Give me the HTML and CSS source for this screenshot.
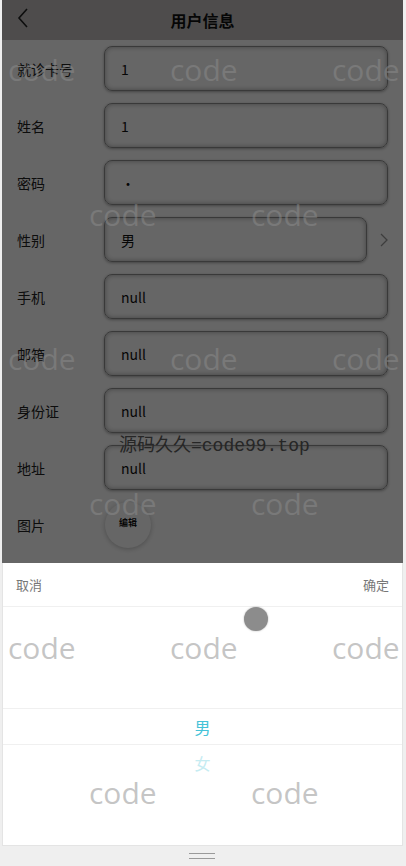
FILE: index.html
```html
<!DOCTYPE html>
<html>
<head>
  <meta charset="utf-8">
  <link rel="stylesheet" href="styles.css">
</head>
<body>
  <div class="screen">
    <div class="page">
      <div class="header">
        <svg class="back" width="14" height="22" viewBox="0 0 14 22">
          <path d="M11 2 L3 11 L11 20" fill="none" stroke="#222" stroke-width="1.6"/>
        </svg>
        <h1>用户信息</h1>
      </div>

      <div class="form">
        <div class="row"><span class="label">就诊卡号</span><div class="field">1</div></div>
        <div class="row"><span class="label">姓名</span><div class="field">1</div></div>
        <div class="row"><span class="label">密码</span><div class="field">·</div></div>
        <div class="row">
          <span class="label">性别</span><div class="field">男</div>
          <svg class="arrow" width="8" height="14" viewBox="0 0 8 14">
            <path d="M1 1 L7 7 L1 13" fill="none" stroke="#999" stroke-width="1.3"/>
          </svg>
        </div>
        <div class="row"><span class="label">手机</span><div class="field">null</div></div>
        <div class="row"><span class="label">邮箱</span><div class="field">null</div></div>
        <div class="row"><span class="label">身份证</span><div class="field">null</div></div>
        <div class="row"><span class="label">地址</span><div class="field">null</div></div>
        <div class="row">
          <span class="label">图片</span>
          <div class="avatar"><span>编辑</span></div>
        </div>
      </div>

      <div class="mask"></div>
    </div>

    <div class="picker">
      <div class="picker-toolbar">
        <span>取消</span>
        <span>确定</span>
      </div>
      <div class="picker-column">
        <div class="picker-item selected">男</div>
        <div class="picker-item faded">女</div>
      </div>
    </div>

    <!-- watermark layer -->
    <div class="watermark">
      <div class="wm-row"><span>code</span><span>code</span><span>code</span></div>
      <div class="wm-row shift"><span>code</span><span>code</span></div>
      <div class="wm-row"><span>code</span><span>code</span><span>code</span></div>
      <div class="wm-row shift"><span>code</span><span>code</span></div>
      <div class="wm-row"><span>code</span><span>code</span><span>code</span></div>
      <div class="wm-row shift"><span>code</span><span>code</span></div>
    </div>
    <div class="site-mark">源码久久=code99.top</div>
    <div class="touch-dot"></div>
  </div>

  <div class="home-bar"><div class="handle"></div></div>
</body>
</html>
```

FILE: styles.css
```css
/* page frame */

body {
  margin: 0;
  background: #efefef;
  font-family: "Noto Sans CJK SC", "Noto Sans", sans-serif;
  color: #333333;
}

.screen {
  position: relative;
  width: 401px;
  height: 846px;
  margin-left: 2px;
  background: #ffffff;
  display: flex;
  flex-direction: column;
  overflow: hidden;
}

.page {
  position: relative;
  height: 563px;
  background: #ffffff;
}

.header {
  height: 40px;
  display: flex;
  align-items: center;
  justify-content: center;
  position: relative;
  background: #c2bfbf;
}

.header h1 {
  margin: 0;
  font-size: 16px;
  font-weight: bold;
  color: #111111;
}

.back {
  position: absolute;
  left: 14px;
  top: 7px;
}

.form {
  display: flex;
  flex-direction: column;
}

.row {
  height: 57px;
  display: flex;
  align-items: center;
  padding: 0 15px;
}

.label {
  width: 87px;
  font-size: 14px;
  color: #222222;
}

.field {
  flex: 1;
  height: 43px;
  border: 1px solid #8f8f8f;
  border-radius: 8px;
  box-sizing: border-box;
  height: 45px;
  display: flex;
  align-items: center;
  padding-left: 16px;
  font-size: 14px;
  color: #111111;
  box-shadow: inset 0 0 5px rgba(0, 0, 0, 0.35), 0 1px 3px rgba(0, 0, 0, 0.35);
}

.arrow {
  margin-left: 13px;
  margin-right: 0;
}

.avatar {
  width: 46px;
  height: 46px;
  border-radius: 50%;
  margin-left: 1px;
  box-shadow: 0 1px 5px rgba(0, 0, 0, 0.25);
  display: flex;
  justify-content: center;
  padding-top: 14px;
  box-sizing: border-box;
}

.avatar span {
  font-size: 9px;
  font-weight: bold;
  color: #111111;
}

.mask {
  position: absolute;
  top: 0;
  left: 0;
  right: 0;
  bottom: 0;
  background: rgba(0, 0, 0, 0.6);
}

/* picker sheet */

.picker {
  flex: 1;
  background: #ffffff;
  border: 1px solid #e4e4e4;
  border-top: none;
  display: flex;
  flex-direction: column;
}

.picker-toolbar {
  height: 43px;
  display: flex;
  justify-content: space-between;
  align-items: center;
  padding: 0 13px 0 13px;
  border-bottom: 1px solid #f0f0f0;
  font-size: 13px;
  color: #777777;
}

.picker-column {
  flex: 1;
  padding-top: 101px;
}

.picker-item {
  height: 36px;
  display: flex;
  align-items: center;
  justify-content: center;
  font-size: 16px;
}

.picker-item.selected {
  height: 35px;
  border-top: 1px solid #f0f0f0;
  border-bottom: 1px solid #f0f0f0;
  color: #45c3d8;
}

.picker-item.faded {
  color: #c6ecf2;
}

/* overlays */

.watermark {
  position: absolute;
  top: 50px;
  left: -2px;
  right: 0;
  bottom: 0;
  pointer-events: none;
}

.wm-row {
  height: 144.5px;
  display: flex;
  gap: 96px;
  padding-left: 8px;
}

.wm-row.shift {
  padding-left: 89px;
}

.wm-row span {
  width: 66px;
  font-family: "Open Sans", sans-serif;
  font-size: 30px;
  line-height: 40px;
  color: rgba(140, 140, 140, 0.5);
}

.site-mark {
  position: absolute;
  left: 117px;
  top: 430px;
  font-family: "Liberation Mono", "Noto Sans CJK SC", monospace;
  font-size: 18px;
  color: #262626;
}

.touch-dot {
  position: absolute;
  left: 242px;
  top: 607px;
  width: 24px;
  height: 24px;
  border-radius: 50%;
  background: #8c8c8c;
  box-shadow: 0 0 2px rgba(0, 0, 0, 0.3);
}

.home-bar {
  height: 20px;
  display: flex;
  justify-content: center;
  align-items: center;
}

.handle {
  width: 26px;
  height: 4px;
  margin-left: -2px;
  border-top: 1px solid #9a9a9a;
  border-bottom: 1px solid #9a9a9a;
}
```
